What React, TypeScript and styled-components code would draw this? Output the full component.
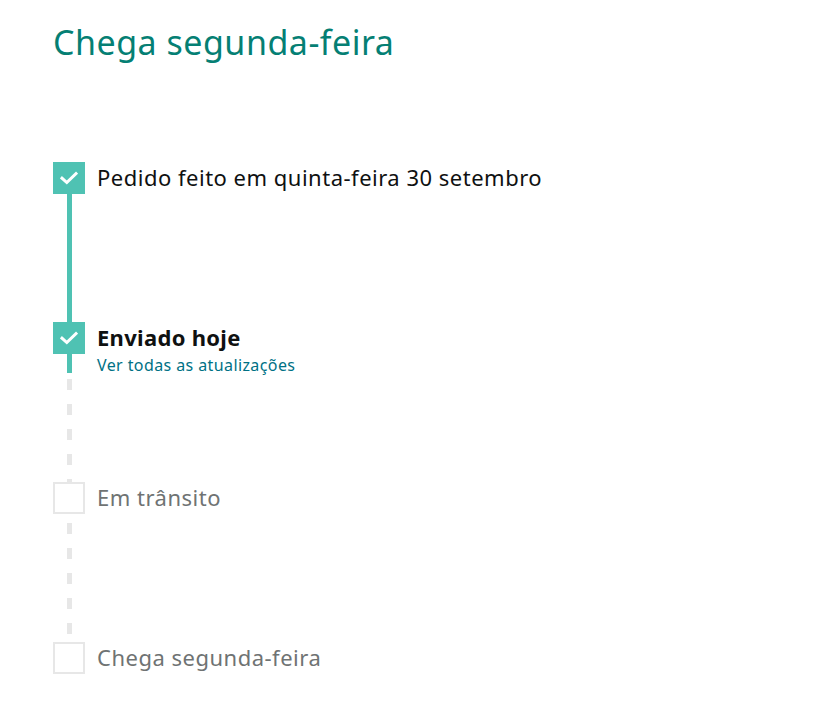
import React from "react";
import styled, { createGlobalStyle } from "styled-components";

const Global = createGlobalStyle`
  html, body { margin: 0; padding: 0; background: #fff; }
  body { font-family: "Noto Sans", "Liberation Sans", sans-serif; }
`;

const Page = styled.div`
  padding: 21px 0 0 53px;
`;

const Title = styled.h1`
  margin: 0 0 98px 0;
  font-size: 34px;
  line-height: 43px;
  font-weight: 400;
  color: #057f74;
  letter-spacing: 0.5px;
`;

const Steps = styled.div`
  display: flex;
  flex-direction: column;
`;

const Step = styled.div<{ $last?: boolean }>`
  display: flex;
  gap: 12px;
  height: ${(p) => (p.$last ? "auto" : "160px")};
`;

const Rail = styled.div`
  width: 32px;
  display: flex;
  flex-direction: column;
  align-items: center;
`;

const Box = styled.div<{ $done: boolean }>`
  width: 32px;
  height: 32px;
  box-sizing: border-box;
  flex-shrink: 0;
  display: flex;
  align-items: center;
  justify-content: center;
  background: ${(p) => (p.$done ? "#4fc2b3" : "#fff")};
  border: ${(p) => (p.$done ? "none" : "2px solid #e7e7e7")};
`;

type Kind = "solid" | "partial" | "dashed";

const dash = "linear-gradient(#e7e7e7 0 11px, transparent 11px 25px)";

const Connector = styled.div<{ $kind: Kind }>`
  width: 5px;
  flex: 1;
  background: ${(p) =>
    p.$kind === "solid"
      ? "#4fc2b3"
      : p.$kind === "partial"
      ? `linear-gradient(#4fc2b3, #4fc2b3) 0 0 / 5px 19px no-repeat, ${dash} 0 0 / 5px 25px repeat-y`
      : `${dash} 0 9px / 5px 25px repeat-y`};
`;

const Content = styled.div`
  display: flex;
  flex-direction: column;
`;

const Label = styled.div<{ $state: "done" | "current" | "pending" }>`
  font-size: 22px;
  line-height: 30px;
  letter-spacing: ${(p) => (p.$state === "current" ? "0.3px" : "0.5px")};
  color: ${(p) => (p.$state === "pending" ? "#6f7373" : "#0f1111")};
  font-weight: ${(p) => (p.$state === "current" ? 700 : 400)};
`;

const Link = styled.a`
  margin-top: 4px;
  font-size: 16px;
  line-height: 19px;
  letter-spacing: 0.4px;
  color: #007185;
  text-decoration: none;
  cursor: pointer;
`;

const Check = () => (
  <svg width="18" height="14" viewBox="0 0 18 14" fill="none">
    <path d="M2 7.2 L6.8 11.5 L16 2.5" stroke="#fff" strokeWidth="3" strokeLinecap="square" />
  </svg>
);

const steps: { label: string; state: "done" | "current" | "pending"; link?: string; conn?: Kind }[] = [
  { label: "Pedido feito em quinta-feira 30 setembro", state: "done", conn: "solid" },
  { label: "Enviado hoje", state: "current", link: "Ver todas as atualizações", conn: "partial" },
  { label: "Em trânsito", state: "pending", conn: "dashed" },
  { label: "Chega segunda-feira", state: "pending" },
];

export default function App() {
  return (
    <Page>
      <Global />
      <Title>Chega segunda-feira</Title>
      <Steps>
        {steps.map((s, i) => (
          <Step key={i} $last={!s.conn}>
            <Rail>
              <Box $done={s.state !== "pending"}>{s.state !== "pending" && <Check />}</Box>
              {s.conn && <Connector $kind={s.conn} />}
            </Rail>
            <Content>
              <Label $state={s.state}>{s.label}</Label>
              {s.link && <Link>{s.link}</Link>}
            </Content>
          </Step>
        ))}
      </Steps>
    </Page>
  );
}
